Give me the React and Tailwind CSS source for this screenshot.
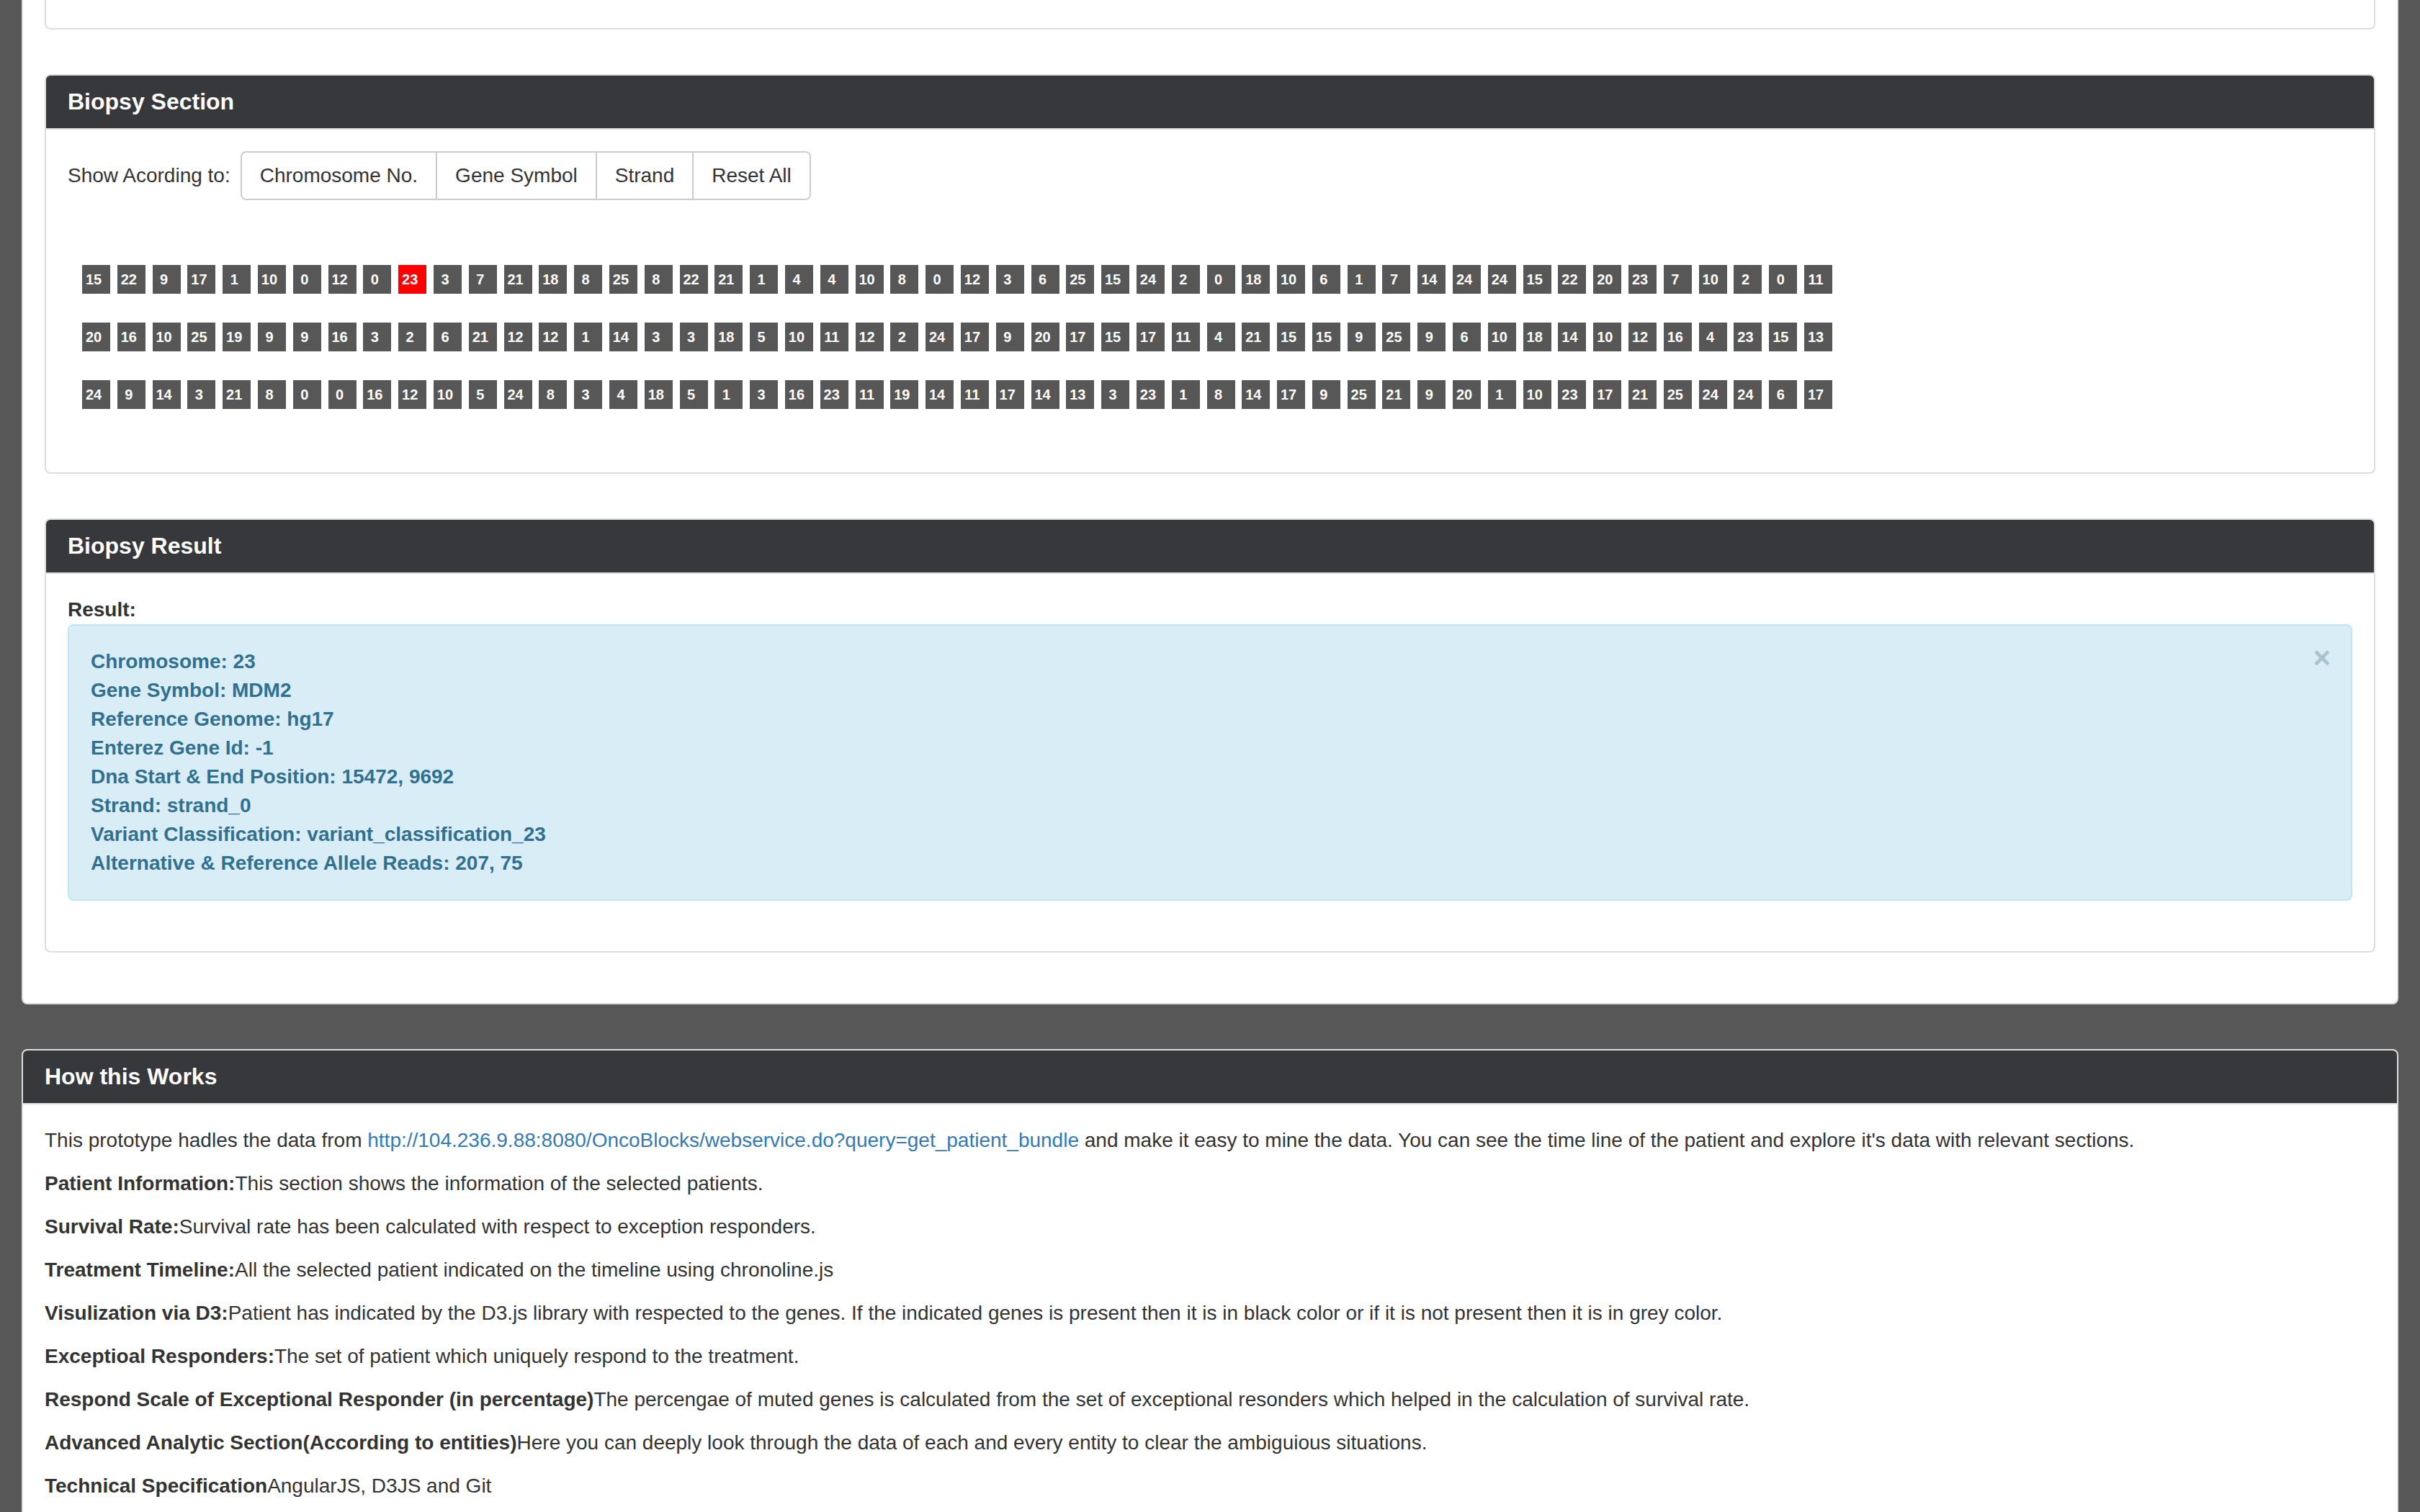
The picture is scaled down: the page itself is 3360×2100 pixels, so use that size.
const rows = [
  [15, 22, 9, 17, 1, 10, 0, 12, 0, 23, 3, 7, 21, 18, 8, 25, 8, 22, 21, 1, 4, 4, 10, 8, 0, 12, 3, 6, 25, 15, 24, 2, 0, 18, 10, 6, 1, 7, 14, 24, 24, 15, 22, 20, 23, 7, 10, 2, 0, 11],
  [20, 16, 10, 25, 19, 9, 9, 16, 3, 2, 6, 21, 12, 12, 1, 14, 3, 3, 18, 5, 10, 11, 12, 2, 24, 17, 9, 20, 17, 15, 17, 11, 4, 21, 15, 15, 9, 25, 9, 6, 10, 18, 14, 10, 12, 16, 4, 23, 15, 13],
  [24, 9, 14, 3, 21, 8, 0, 0, 16, 12, 10, 5, 24, 8, 3, 4, 18, 5, 1, 3, 16, 23, 11, 19, 14, 11, 17, 14, 13, 3, 23, 1, 8, 14, 17, 9, 25, 21, 9, 20, 1, 10, 23, 17, 21, 25, 24, 24, 6, 17],
];

const result = [
  "Chromosome: 23",
  "Gene Symbol: MDM2",
  "Reference Genome: hg17",
  "Enterez Gene Id: -1",
  "Dna Start & End Position: 15472, 9692",
  "Strand: strand_0",
  "Variant Classification: variant_classification_23",
  "Alternative & Reference Allele Reads: 207, 75",
];

const notes = [
  ["Patient Information:", "This section shows the information of the selected patients."],
  ["Survival Rate:", "Survival rate has been calculated with respect to exception responders."],
  ["Treatment Timeline:", "All the selected patient indicated on the timeline using chronoline.js"],
  ["Visulization via D3:", "Patient has indicated by the D3.js library with respected to the genes. If the indicated genes is present then it is in black color or if it is not present then it is in grey color."],
  ["Exceptioal Responders:", "The set of patient which uniquely respond to the treatment."],
  ["Respond Scale of Exceptional Responder (in percentage)", "The percengae of muted genes is calculated from the set of exceptional resonders which helped in the calculation of survival rate."],
  ["Advanced Analytic Section(According to entities)", "Here you can deeply look through the data of each and every entity to clear the ambiguious situations."],
  ["Technical Specification", "AngularJS, D3JS and Git"],
];

function Heading({ title }) {
  return (
    <div className="h-[75px] bg-[#37383c] border-b-2 border-[#ddd] px-[30px] flex items-center">
      <h3 className="text-[32px] leading-[35px] font-bold text-white">{title}</h3>
    </div>
  );
}

function Block({ n, active }) {
  return (
    <div
      className={
        "w-[39px] h-[40px] shrink-0 flex items-center justify-center pr-[7px] text-white text-[20px] font-bold leading-none " +
        (active ? "bg-[#ff0000]" : "bg-[#575757]")
      }
    >
      {n}
    </div>
  );
}

export default function App() {
  const btns = ["Chromosome No.", "Gene Symbol", "Strand", "Reset All"];
  return (
    <div className="h-[2100px] overflow-hidden bg-[#575757] px-[30px] font-['Liberation_Sans',Arial,sans-serif] text-[28px] leading-[40px] text-[#333]">
      <div className="bg-white border-x-2 border-b-2 border-[#ddd] rounded-b-[8px] px-[30px] pb-[70px]">
        <div className="h-[41px] border-x-2 border-b-2 border-[#ddd] rounded-b-[8px]" />

        <div className="mt-[62px] border-2 border-[#ddd] rounded-[8px] overflow-hidden">
          <Heading title="Biopsy Section" />
          <div className="pt-[30px] pb-[88px] px-[30px]">
            <div className="flex items-center">
              <span className="mr-[14px]">Show Acording to:</span>
              <div className="flex border-2 border-[#ccc] rounded-[8px] overflow-hidden">
                {btns.map((b, i) => (
                  <button
                    key={b}
                    className={
                      "h-[64px] px-[25px] bg-white text-[#333] text-[28px] " +
                      (i > 0 ? "border-l-2 border-[#ccc]" : "")
                    }
                  >
                    {b}
                  </button>
                ))}
              </div>
            </div>
            <div className="mt-[90px] ml-[20px] flex flex-col gap-[40px]">
              {rows.map((r, ri) => (
                <div key={ri} className="flex gap-[9.8px]">
                  {r.map((n, i) => (
                    <Block key={i} n={n} active={ri === 0 && i === 9} />
                  ))}
                </div>
              ))}
            </div>
          </div>
        </div>

        <div className="mt-[62px] border-2 border-[#ddd] rounded-[8px] overflow-hidden">
          <Heading title="Biopsy Result" />
          <div className="pt-[30px] pb-[30px] px-[30px]">
            <div className="font-bold">Result:</div>
            <div className="relative mb-[40px] border-2 border-[#bce8f1] bg-[#d9edf7] rounded-[8px] p-[30px] text-[#31708f] font-bold">
              <span className="absolute top-[24px] right-[28px] text-[42px] leading-none font-bold text-[#aac3cf]">×</span>
              {result.map((l) => (
                <div key={l}>{l}</div>
              ))}
            </div>
          </div>
        </div>
      </div>

      <div className="mt-[62px] bg-white border-2 border-[#ddd] rounded-[8px] overflow-hidden">
        <Heading title="How this Works" />
        <div className="p-[30px]">
          <p className="mb-[20px]">
            This prototype hadles the data from{" "}
            <a className="text-[#337ab7]" href="#">
              http://104.236.9.88:8080/OncoBlocks/webservice.do?query=get_patient_bundle
            </a>{" "}
            and make it easy to mine the data. You can see the time line of the patient and explore it's data with relevant sections.
          </p>
          {notes.map(([b, t]) => (
            <p key={b} className="mb-[20px]">
              <b>{b}</b>
              {t}
            </p>
          ))}
        </div>
      </div>
    </div>
  );
}
